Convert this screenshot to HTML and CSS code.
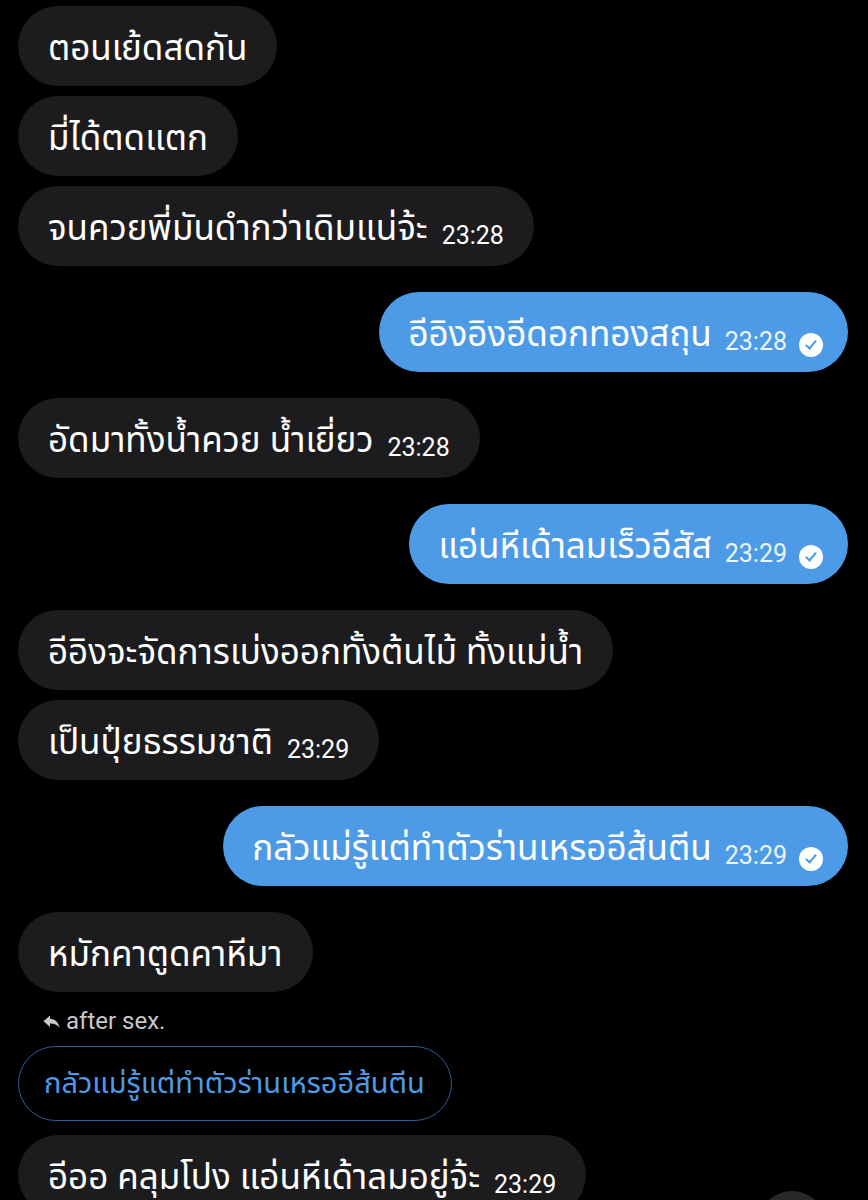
FILE: index.html
```html
<!DOCTYPE html>
<html lang="th">
<head>
    <meta charset="UTF-8">
    <meta name="viewport" content="width=device-width, initial-scale=1.0">
    <title>Chat</title>
    <link rel="stylesheet" href="styles.css">
</head>
<body>
    <div class="chat">
        <div class="group">
            <div class="bubble in"><span class="text">ตอนเย้ดสดกัน</span></div>
            <div class="bubble in"><span class="text">มี่ได้ตดแตก</span></div>
            <div class="bubble in"><span class="text">จนควยพี่มันดำกว่าเดิมแน่จ้ะ</span><span class="time">23:28</span></div>
        </div>

        <div class="group">
            <div class="bubble out"><span class="text">อีอิงอิงอีดอกทองสถุน</span><span class="time">23:28</span><span class="check"></span></div>
        </div>

        <div class="group">
            <div class="bubble in"><span class="text">อัดมาทั้งน้ำควย น้ำเยี่ยว</span><span class="time">23:28</span></div>
        </div>

        <div class="group">
            <div class="bubble out"><span class="text">แอ่นหีเด้าลมเร็วอีสัส</span><span class="time">23:29</span><span class="check"></span></div>
        </div>

        <div class="group">
            <div class="bubble in"><span class="text">อีอิงจะจัดการเบ่งออกทั้งต้นไม้ ทั้งแม่น้ำ</span></div>
            <div class="bubble in"><span class="text">เป็นปุ๋ยธรรมชาติ</span><span class="time">23:29</span></div>
        </div>

        <div class="group">
            <div class="bubble out"><span class="text">กลัวแม่รู้แต่ทำตัวร่านเหรออีส้นตีน</span><span class="time">23:29</span><span class="check"></span></div>
        </div>

        <div class="group">
            <div class="bubble in"><span class="text">หมักคาตูดคาหีมา</span></div>
            <div class="reply-label">
                <svg class="reply-icon" viewBox="0 0 17 13" width="17" height="13">
                    <path d="M7 0.5 0.5 6.2 7 12V8.6c4.2 0 7.3 1.2 9.5 4.2C15.8 8 13 4.4 7 3.8z" fill="#c8c8cc"/>
                </svg>
                <span>after sex.</span>
            </div>
            <div class="quote">กลัวแม่รู้แต่ทำตัวร่านเหรออีส้นตีน</div>
            <div class="bubble in last"><span class="text">อีออ คลุมโปง แอ่นหีเด้าลมอยู่จ้ะ</span><span class="time">23:29</span></div>
        </div>
    </div>
    <div class="scroll-btn"></div>
</body>
</html>
```

FILE: styles.css
```css
body {
    margin: 0;
    padding: 0;
    background-color: #000;
    font-family: "Noto Sans Thai", "Noto Sans", "DejaVu Sans", sans-serif;
    color: #fff;
    overflow: hidden;
    height: 1200px;
    position: relative;
}
.chat {
    display: flex;
    flex-direction: column;
    gap: 26px;
    padding: 6px 20px 0 18px;
}
.group {
    display: flex;
    flex-direction: column;
    gap: 10px;
}
.bubble {
    display: flex;
    align-items: baseline;
    height: 80px;
    box-sizing: border-box;
    padding: 8px 30px 0 30px;
    border-radius: 40px;
    align-self: flex-start;
    line-height: 72px;
}
.bubble.in {
    background-color: #1c1c1e;
}
.bubble.out {
    background-color: #4d9be6;
    align-self: flex-end;
    padding-left: 29px;
    padding-right: 25px;
}
.bubble.last {
    margin-top: 4px;
}
.text {
    font-size: 35px;
    white-space: nowrap;
}
.time {
    font-family: "Roboto", "Inter", sans-serif;
    font-size: 25px;
    margin-left: 14px;
    position: relative;
    top: 4px;
    white-space: nowrap;
}
.out .time {
    color: #edf5fd;
    margin-left: 13px;
}
.check {
    width: 24px;
    height: 24px;
    border-radius: 50%;
    background-color: #fff;
    margin-left: 12px;
    margin-bottom: 15px;
    align-self: flex-end;
    position: relative;
    flex-shrink: 0;
}
.check::after {
    content: "";
    position: absolute;
    left: 9px;
    top: 5px;
    width: 4px;
    height: 9px;
    border-right: 2.5px solid #4d9be6;
    border-bottom: 2.5px solid #4d9be6;
    transform: rotate(40deg);
}
.reply-label {
    display: flex;
    align-items: center;
    gap: 6px;
    height: 30px;
    padding-left: 25px;
    margin-top: 4px;
    font-family: "Roboto", "Inter", sans-serif;
    font-size: 24px;
    color: #c8c8cc;
}
.quote {
    align-self: flex-start;
    border: 1.5px solid #2e5f99;
    border-radius: 38px;
    height: 75px;
    box-sizing: border-box;
    padding: 4px 26px 0 25px;
    line-height: 66px;
    font-size: 29px;
    color: #4d9be6;
    white-space: nowrap;
}
.scroll-btn {
    position: absolute;
    left: 757px;
    top: 1191px;
    width: 70px;
    height: 70px;
    border-radius: 50%;
    background-color: #29292b;
}
```
